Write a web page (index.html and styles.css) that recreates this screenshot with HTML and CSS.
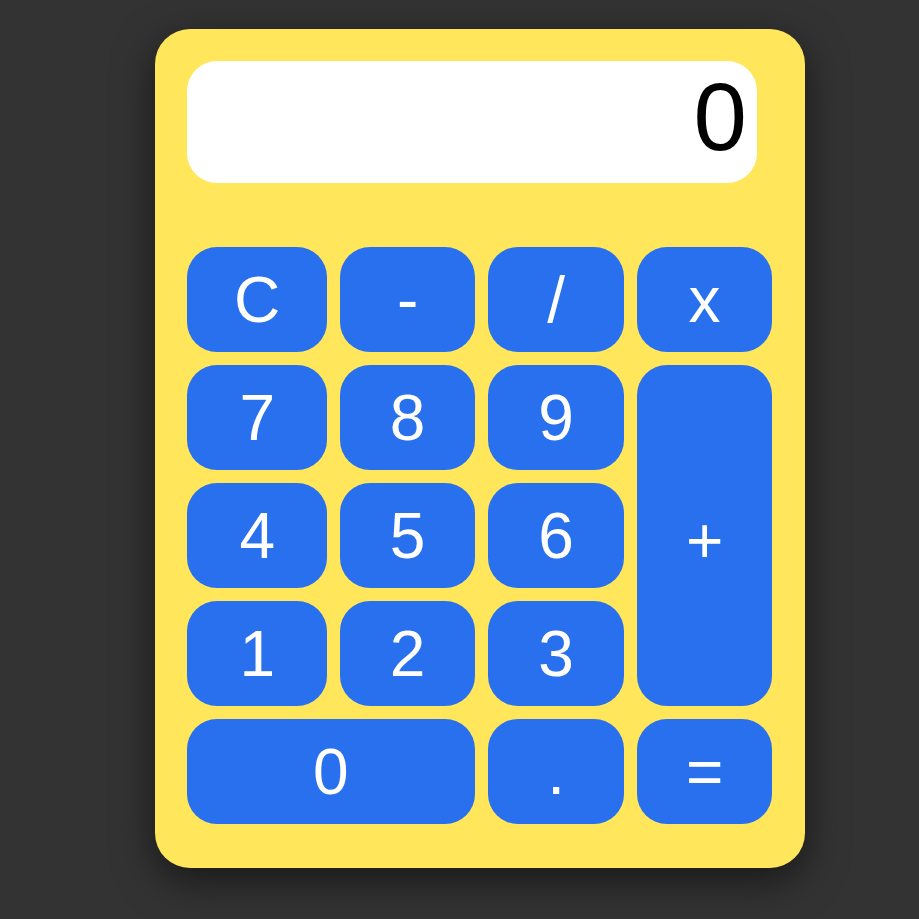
FILE: index.html
```html
<!DOCTYPE html>
<html lang="en">
<head>
<meta charset="utf-8">
<title>Calculator</title>
<link rel="stylesheet" href="styles.css">
</head>
<body>
  <div class="calculator">
    <div class="display">0</div>
    <div class="keys">
      <button class="key">C</button>
      <button class="key">-</button>
      <button class="key">/</button>
      <button class="key">x</button>
      <button class="key">7</button>
      <button class="key">8</button>
      <button class="key">9</button>
      <button class="key key-plus">+</button>
      <button class="key">4</button>
      <button class="key">5</button>
      <button class="key">6</button>
      <button class="key">1</button>
      <button class="key">2</button>
      <button class="key">3</button>
      <button class="key key-zero">0</button>
      <button class="key">.</button>
      <button class="key">=</button>
    </div>
  </div>
</body>
</html>
```
FILE: styles.css
```css
html, body {
  margin: 0;
  height: 100%;
}
body {
  background: #333333;
  padding: 29px 0 0 155px;
  box-sizing: border-box;
  overflow: hidden;
  font-family: "Liberation Sans", Arial, sans-serif;
}
.calculator {
  width: 650px;
  height: 839px;
  box-sizing: border-box;
  background: #ffe65a;
  border-radius: 35px;
  padding: 32px 32px 0 32px;
  box-shadow: 0 12px 40px rgba(0, 0, 0, 0.55);
  display: flex;
  flex-direction: column;
}
.display {
  width: 570px;
  height: 122px;
  box-sizing: border-box;
  background: #ffffff;
  border-radius: 30px;
  padding: 1px 10px 0 10px;
  text-align: right;
  font-size: 96px;
  line-height: normal;
  color: #000000;
}
.keys {
  margin-top: 64px;
  display: grid;
  grid-template-columns: 140.4px 134.3px 136.7px 134.4px;
  grid-auto-rows: 105px;
  gap: 13px;
}
.key {
  border: none;
  margin: 0;
  padding: 0;
  background: #2970ee;
  color: #ffffff;
  border-radius: 30px;
  font-family: "Liberation Sans", Arial, sans-serif;
  font-size: 64px;
  line-height: 1;
  display: flex;
  align-items: center;
  justify-content: center;
}
.key-plus {
  grid-column: 4;
  grid-row: 2 / span 3;
  padding-top: 10px;
}
.key-zero {
  grid-column: 1 / span 2;
}
```
